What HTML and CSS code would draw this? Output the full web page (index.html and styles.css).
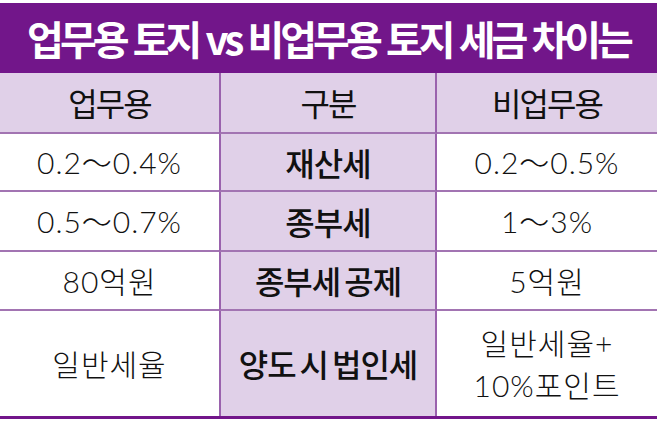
FILE: index.html
```html
<!DOCTYPE html>
<html lang="ko">
<head>
<meta charset="utf-8">
<link rel="stylesheet" href="styles.css">
</head>
<body>
<div class="card">
  <h1 class="title">업무용 토지 vs 비업무용 토지 세금 차이는</h1>
  <div class="grid">
    <div class="cell head">업무용</div>
    <div class="cell head mid">구분</div>
    <div class="cell head">비업무용</div>

    <div class="cell num">0.2～0.4%</div>
    <div class="cell mid label">재산세</div>
    <div class="cell num">0.2～0.5%</div>

    <div class="cell num">0.5～0.7%</div>
    <div class="cell mid label">종부세</div>
    <div class="cell num">1～3%</div>

    <div class="cell">80억원</div>
    <div class="cell mid label">종부세 공제</div>
    <div class="cell">5억원</div>

    <div class="cell last">일반세율</div>
    <div class="cell mid label last">양도 시 법인세</div>
    <div class="cell last">일반세율+<br>10%포인트</div>
  </div>
</div>
</body>
</html>
```

FILE: styles.css
```css
html, body {
  margin: 0;
  padding: 0;
  background: #ffffff;
}

.card {
  width: 657px;
  padding-top: 3px;
  font-family: "Noto Sans CJK KR", "Noto Sans", sans-serif;
}

.title {
  margin: 0;
  height: 70px;
  background: #72168a;
  color: #ffffff;
  font-size: 40px;
  font-weight: 700;
  letter-spacing: -4px;
  line-height: 70px;
  text-align: center;
  white-space: nowrap;
}

.grid {
  display: grid;
  grid-template-columns: 219px 218px 1fr;
  grid-template-rows: 61px 58px 60px 59px 105px;
  border-bottom: 3px solid #72168a;
}

.cell {
  display: flex;
  align-items: center;
  justify-content: center;
  text-align: center;
  border-bottom: 2px solid #a274b2;
  color: #111111;
  font-family: "Lato", "Noto Sans CJK KR", sans-serif;
  font-size: 30px;
  font-weight: 300;
  letter-spacing: 1px;
  line-height: 1.4;
  box-sizing: border-box;
}

.cell.num {
  letter-spacing: 1px;
}

.cell.last {
  border-bottom: none;
}

.head {
  background: #e0d0e8;
  font-family: "Noto Sans CJK KR", sans-serif;
  font-weight: 400;
  font-size: 32px;
  letter-spacing: -2px;
}

.mid {
  background: #e0d0e8;
  border-left: 2px solid #9a62ad;
  border-right: 2px solid #9a62ad;
}

.label {
  font-family: "Noto Sans CJK KR", sans-serif;
  font-weight: 500;
  font-size: 32px;
  letter-spacing: -1px;
  word-spacing: -4px;
}
```
